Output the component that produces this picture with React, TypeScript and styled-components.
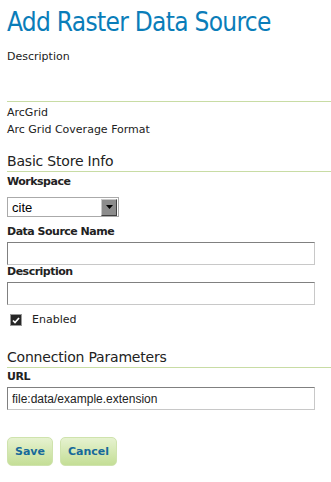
import styled, { createGlobalStyle } from "styled-components";

const GlobalStyle = createGlobalStyle`
  body {
    margin: 0;
    background: #fff;
    font-family: "DejaVu Sans", Verdana, sans-serif;
    color: #222;
  }
`;

const App = () => {
  return (
    <>
      <GlobalStyle />
      <Page>
        <Title>Add Raster Data Source</Title>
        <Intro>Description</Intro>
        <Divider />
        <StoreType>
          <Plain>ArcGrid</Plain>
          <Plain>Arc Grid Coverage Format</Plain>
        </StoreType>

        <SectionTitle $top={16}>Basic Store Info</SectionTitle>
        <Field $top={3}>
          <Label>Workspace</Label>
          <Select>
            <SelectValue>cite</SelectValue>
            <SelectButton>
              <svg width="7" height="4" viewBox="0 0 7 4">
                <path d="M0 0h7L3.5 4z" fill="#000" />
              </svg>
            </SelectButton>
          </Select>
        </Field>
        <Field>
          <Label>Data Source Name</Label>
          <TextInput defaultValue="" />
        </Field>
        <Field>
          <Label>Description</Label>
          <TextInput defaultValue="" />
        </Field>
        <CheckRow>
          <CheckBox>
            <svg width="8" height="7" viewBox="0 0 8 7">
              <path d="M1 3.5l2 2 4-4.5" stroke="#fff" strokeWidth="1.7" fill="none" />
            </svg>
          </CheckBox>
          <Plain>Enabled</Plain>
        </CheckRow>

        <SectionTitle $top={22}>Connection Parameters</SectionTitle>
        <Field $top={2}>
          <Label>URL</Label>
          <TextInput defaultValue="file:data/example.extension" />
        </Field>

        <Buttons>
          <Button>Save</Button>
          <Button>Cancel</Button>
        </Buttons>
      </Page>
    </>
  );
};

const Page = styled.div`
  padding: 6px 0 20px 7px;
`;
const Title = styled.h1`
  margin: 0;
  font-family: "DejaVu Sans Condensed", "DejaVu Sans", sans-serif;
  font-stretch: condensed;
  font-weight: normal;
  font-size: 26px;
  line-height: 32px;
  color: #0a7db9;
  letter-spacing: -0.7px;
`;
const Intro = styled.p`
  margin: 12px 0 0;
  font-size: 11px;
  line-height: 14px;
`;
const Divider = styled.div`
  margin-top: 37px;
  height: 1px;
  background: #c8dca4;
`;
const StoreType = styled.div`
  display: flex;
  flex-direction: column;
  gap: 3px;
  margin-top: 4px;
`;
const Plain = styled.span`
  font-size: 11px;
  line-height: 14px;
`;
const SectionTitle = styled.h2<{ $top: number }>`
  margin: ${(p) => p.$top}px 0 0;
  padding-bottom: 1px;
  font-weight: normal;
  font-size: 14px;
  line-height: 17px;
  letter-spacing: -0.2px;
  color: #222;
  border-bottom: 1px solid #c8dca4;
`;
const Field = styled.div<{ $top?: number }>`
  display: flex;
  flex-direction: column;
  margin-top: ${(p) => p.$top ?? 0}px;
`;
const Label = styled.label`
  font-size: 11px;
  font-weight: bold;
  line-height: 14px;
  letter-spacing: -0.5px;
  color: #222;
  margin-bottom: 3px;
`;
const Select = styled.div`
  display: flex;
  align-items: center;
  justify-content: space-between;
  box-sizing: border-box;
  width: 112px;
  height: 20px;
  margin: 5px 0 8px;
  border: 1px solid #aaa;
  padding: 0 1px 0 4px;
`;
const SelectValue = styled.span`
  font-family: "Liberation Sans", Arial, sans-serif;
  font-size: 13px;
  color: #000;
`;
const SelectButton = styled.span`
  display: flex;
  align-items: center;
  justify-content: center;
  width: 16px;
  height: 17px;
  box-sizing: border-box;
  background: #8c8c8c;
  border: 1px solid;
  border-color: #c8c8c8 #404040 #404040 #c8c8c8;
`;
const TextInput = styled.input`
  box-sizing: border-box;
  width: 308px;
  height: 23px;
  border: 1px solid;
  border-color: #808080 #c8c8c8 #c8c8c8 #808080;
  padding: 0 4px;
  font-family: "Liberation Sans", Arial, sans-serif;
  font-size: 12px;
  color: #222;
  outline: none;
`;
const CheckRow = styled.div`
  display: flex;
  align-items: center;
  gap: 10px;
  height: 14px;
  margin-top: 8px;
  padding-left: 3px;
`;
const CheckBox = styled.span`
  display: flex;
  align-items: center;
  justify-content: center;
  width: 12px;
  height: 12px;
  box-sizing: border-box;
  background: #262626;
  border: 1px solid #999;
`;
const Buttons = styled.div`
  display: flex;
  gap: 7px;
  margin-top: 27px;
`;
const Button = styled.button`
  height: 29px;
  padding: 0 7px;
  border: 1px solid #cfe3ad;
  border-radius: 5px;
  background: linear-gradient(#e6f2d0, #c4de96);
  font-family: "DejaVu Sans", sans-serif;
  font-size: 11px;
  font-weight: bold;
  color: #17699a;
  cursor: pointer;
`;

export default App;
